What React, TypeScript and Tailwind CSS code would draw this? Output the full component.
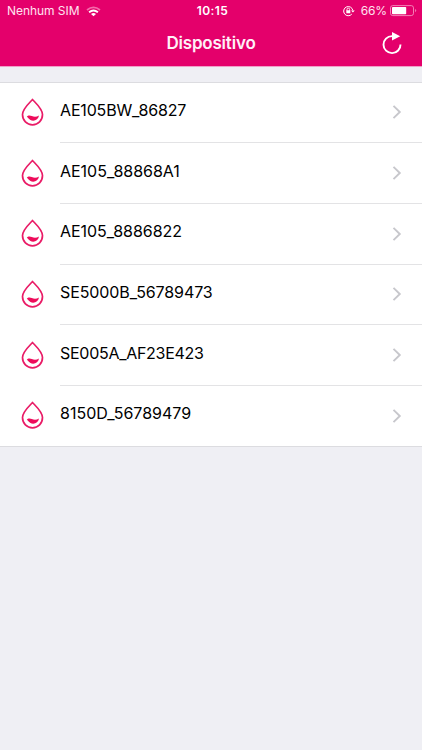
const devices = [
  { name: 'AE105BW_86827', spacing: 'tracking-[-0.16px]' },
  { name: 'AE105_88868A1', spacing: 'tracking-[-0.02px]' },
  { name: 'AE105_8886822', spacing: 'tracking-[-0.05px]' },
  { name: 'SE5000B_56789473', spacing: 'tracking-[-0.1px]' },
  { name: 'SE005A_AF23E423', spacing: 'tracking-[-0.28px]' },
  { name: '8150D_56789479', spacing: 'tracking-[0px]' },
];

function DropIcon() {
  return (
    <svg className="h-7 w-6 shrink-0" viewBox="0 0 24 28" fill="none">
      <path
        d="M11.5 1.5C8.9 4.4 1.5 10.8 1.5 16.6C1.5 22.6 5.9 26.8 11.5 26.8S21.5 22.6 21.5 16.6C21.5 10.8 14.1 4.4 11.5 1.5Z"
        stroke="#e91b66"
        strokeWidth="1.7"
        strokeLinejoin="round"
      />
      <path
        d="M5.8 18.8C6.8 17.2 8.8 17 10.8 18C13.2 19.2 15.4 19.1 18 17.6C17.4 20.9 15.1 22.8 12.2 22.8C9.9 22.8 8.8 21.5 7.6 20.5C7 19.9 6.5 19.2 5.8 18.8Z"
        fill="#ee0c5b"
      />
    </svg>
  );
}

function Wifi() {
  return (
    <svg className="ml-[7px] h-[11px] w-[15px]" viewBox="0 0 15 11" fill="none">
      <path d="M1 4Q7.5 -1.2 14 4" stroke="#f46aab" strokeWidth="1.7" />
      <path d="M3.1 6.2Q7.5 2.7 11.9 6.2" stroke="white" strokeWidth="1.9" />
      <path d="M5 7.9Q7.5 6.2 10 7.9L7.5 10.2Z" fill="white" />
    </svg>
  );
}

function OrientationLock() {
  return (
    <svg className="h-[11px] w-3" viewBox="0 0 12 11" fill="none" stroke="white">
      <path d="M8.8 8.1A4.6 4.6 0 1 1 9.8 4.4" strokeWidth="1" />
      <path d="M8 4.4H11.8L9.9 6.6Z" fill="white" stroke="none" />
      <path d="M4 4.8V3.4A1.3 1.3 0 0 1 6.6 3.4V4.8" strokeWidth=".9" />
      <rect x="3.3" y="4.2" width="4" height="3.1" rx=".3" fill="white" stroke="none" />
    </svg>
  );
}

function Battery() {
  return (
    <svg className="ml-[3px] h-3 w-[27px]" viewBox="0 0 27 12" fill="none">
      <rect x=".5" y=".6" width="23" height="10" rx="2.3" stroke="#f58dbd" strokeWidth=".9" />
      <rect x="2" y="2" width="14.2" height="7.2" rx=".7" fill="white" />
      <path d="M25.2 3.9Q27.3 5.6 25.2 7.3Z" fill="#f58dbd" />
    </svg>
  );
}

export default function App() {
  return (
    <div className="flex h-[750px] w-[422px] flex-col overflow-hidden bg-[#efeff4] font-['Inter','Liberation_Sans',sans-serif]">
      <header className="h-[67px] shrink-0 border-b border-[#ef9fc7] bg-[#e4006b] text-white">
        <div className="grid h-[22px] grid-cols-[1fr_auto_1fr] items-center text-[12px] leading-[22px]">
          <div className="flex items-center pl-[7px]">
            <span className="tracking-[-0.05px] text-[#ffe3f0]">Nenhum SIM</span>
            <Wifi />
          </div>
          <span className="pl-[3px] font-semibold tracking-[0.45px]">10:15</span>
          <div className="flex items-center justify-end pr-[5px]">
            <OrientationLock />
            <span className="ml-[6px] tracking-[-0.1px] text-[#ffe3f0]">66%</span>
            <Battery />
          </div>
        </div>
        <div className="grid h-11 grid-cols-[1fr_auto_1fr] items-center">
          <span />
          <h1 className="pb-[2px] text-[17px] font-semibold leading-[42px] tracking-[-0.2px] text-[#fff0f7]">
            Dispositivo
          </h1>
          <button className="mr-[18px] justify-self-end" aria-label="Atualizar">
            <svg className="h-6 w-6" viewBox="0 0 24 24" fill="none">
              <path d="M13 4.1H12A8.5 8.5 0 1 0 20.5 12.4" stroke="white" strokeWidth="1.9" />
              <path d="M12 0L20.2 4.3L12 8.6Z" fill="white" />
            </svg>
          </button>
        </div>
      </header>
      <main className="mt-[14.6px] border-y border-[#dcdce0] bg-white">
        {devices.map((device) => (
          <div key={device.name} className="group flex h-[60.7px] pl-[21px] last:h-[59.9px]">
            <div className="pt-[15.4px]">
              <DropIcon />
            </div>
            <div className="ml-[15px] flex flex-1 justify-between border-b border-[#e3e3e5] group-last:border-b-0">
              <span className={`pt-[15.3px] text-[16px] leading-6 text-black ${device.spacing}`}>
                {device.name}
              </span>
              <svg className="mt-[21.8px] mr-[20px] h-4 w-[10px]" viewBox="0 0 10 16" fill="none">
                <path d="M1.5 1.9L7.8 8L1.5 14.1" stroke="#c7c7cc" strokeWidth="1.9" />
              </svg>
            </div>
          </div>
        ))}
      </main>
    </div>
  );
}
